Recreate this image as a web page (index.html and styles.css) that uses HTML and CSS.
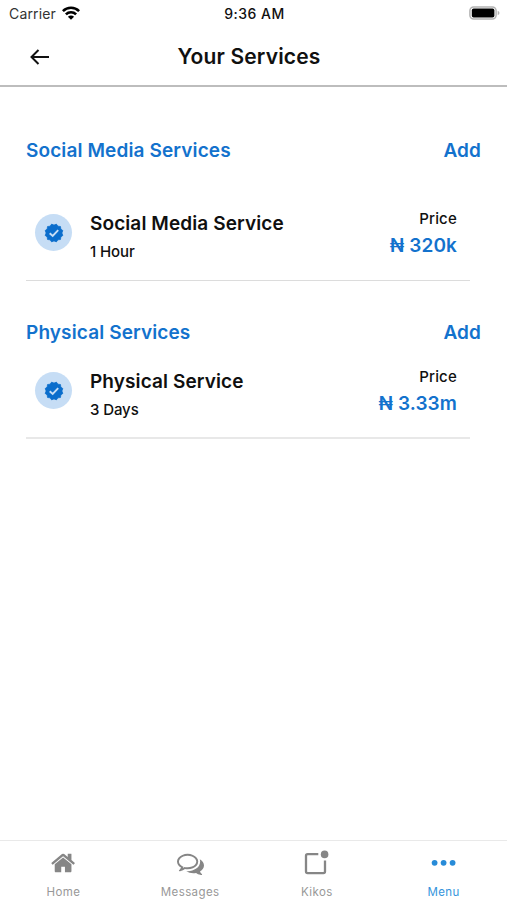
FILE: index.html
```html
<!DOCTYPE html>
<html lang="en">
<head>
<meta charset="UTF-8">
<meta name="viewport" content="width=device-width, initial-scale=1.0">
<title>Your Services</title>
<link rel="stylesheet" href="styles.css">
</head>
<body>

<!-- Status bar -->
<div class="status-bar">
    <div class="carrier">
        <span class="carrier-name">Carrier</span>
        <svg class="wifi" viewBox="0 0 18 14" width="18" height="14">
            <g fill="none" stroke="#000" stroke-width="2.6">
                <path d="M.9 5.1C5.4.6 12.6.6 17.1 5.1"/>
                <path d="M3.9 8.4C6.7 5.6 11.3 5.6 14.1 8.4"/>
            </g>
            <path d="M9 13.8L5.9 10.8C7.6 9.2 10.4 9.2 12.1 10.8Z"/>
        </svg>
    </div>
    <span class="time">9:36 AM</span>
    <svg class="battery" viewBox="0 0 31 14" width="31" height="14">
        <rect x=".9" y=".9" width="26.2" height="12.2" rx="3.8" fill="#fff" stroke="#b3b3b3" stroke-width="1.5"/>
        <rect x="2.8" y="2.6" width="22.6" height="8.9" rx="1.8"/>
        <path d="M28.7 4.8q1.8.7 1.8 2.2t-1.8 2.2z" fill="#b3b3b3"/>
    </svg>
</div>

<!-- Header -->
<div class="header">
    <svg class="back" viewBox="0 0 20 16" width="20" height="16">
        <path d="M19 8H1.5M8.5 1L1.5 8l7 7" fill="none" stroke="#111" stroke-width="2"/>
    </svg>
    <h1 class="title">Your Services</h1>
</div>

<!-- Services -->
<div class="content">
    <div class="section social">
        <div class="section-head">
            <h2>Social Media Services</h2>
            <a class="add">Add</a>
        </div>
        <div class="service">
            <div class="badge">
                <svg viewBox="0 0 20 20" width="20" height="20">
                    <path class="seal" d="M10 2.1L12.38 1.11 13.95 3.16 16.5 3.5 16.84 6.05 18.89 7.62 17.9 10 18.89 12.38 16.84 13.95 16.5 16.5 13.95 16.84 12.38 18.89 10 17.9 7.62 18.89 6.05 16.84 3.5 16.5 3.16 13.95 1.11 12.38 2.1 10 1.11 7.62 3.16 6.05 3.5 3.5 6.05 3.16 7.62 1.11Z"/>
                    <path class="check" d="M5.7 10.2L8.7 13 14.2 7.2"/>
                </svg>
            </div>
            <div class="info">
                <h3>Social Media Service</h3>
                <p>1 Hour</p>
            </div>
            <div class="price">
                <span class="label">Price</span>
                <span class="amount">₦ 320k</span>
            </div>
        </div>
    </div>

    <div class="section physical">
        <div class="section-head">
            <h2>Physical Services</h2>
            <a class="add">Add</a>
        </div>
        <div class="service">
            <div class="badge">
                <svg viewBox="0 0 20 20" width="20" height="20">
                    <path class="seal" d="M10 2.1L12.38 1.11 13.95 3.16 16.5 3.5 16.84 6.05 18.89 7.62 17.9 10 18.89 12.38 16.84 13.95 16.5 16.5 13.95 16.84 12.38 18.89 10 17.9 7.62 18.89 6.05 16.84 3.5 16.5 3.16 13.95 1.11 12.38 2.1 10 1.11 7.62 3.16 6.05 3.5 3.5 6.05 3.16 7.62 1.11Z"/>
                    <path class="check" d="M5.7 10.2L8.7 13 14.2 7.2"/>
                </svg>
            </div>
            <div class="info">
                <h3>Physical Service</h3>
                <p>3 Days</p>
            </div>
            <div class="price">
                <span class="label">Price</span>
                <span class="amount">₦ 3.33m</span>
            </div>
        </div>
    </div>
</div>

<!-- Bottom tabs -->
<div class="tabs">
    <div class="tab">
        <svg viewBox="-70 0 1792 1792" width="26" height="26"><path d="M1408 992v480q0 26-19 45t-45 19h-384v-384h-256v384h-384q-26 0-45-19t-19-45v-480q0-1 .5-3t.5-3l575-474 575 474q1 2 1 6zm223-69l-62 74q-8 9-21 11h-3q-13 0-21-7l-692-577-692 577q-12 8-24 7-13-2-21-11l-62-74q-8-10-7-23.5t11-21.5l719-599q32-26 76-26t76 26l244 204v-195q0-14 9-23t23-9h192q14 0 23 9t9 23v408l219 182q10 8 11 21.5t-7 23.5z"/></svg>
        <span>Home</span>
    </div>
    <div class="tab">
        <svg viewBox="0 0 1792 1792" width="27" height="27"><path d="M704 384q-153 0-286 52t-211.5 141-78.5 191q0 82 53 158t149 132l97 56-35 84q34-20 62-39l44-31 53 10q78 14 153 14 153 0 286-52t211.5-141 78.5-191-78.5-191-211.5-141-286-52zm0-128q191 0 353.5 68.5t256.5 186.5 94 257-94 257-256.5 186.5-353.5 68.5q-86 0-176-16-124 88-278 128-36 9-86 16h-3q-11 0-20.5-8t-11.5-21q-1-3-1-6.5t.5-6.5 2-6l2.5-5 3.5-5.5 4-5 4.5-5 4-4.5q5-6 23-25t26-29.5 22.5-29 25-38.5 20.5-44q-124-72-195-177t-71-224q0-139 94-257t256.5-186.5 353.5-68.5zm822 1169q10 24 20.5 44t25 38.5 22.5 29 26 29.5 23 25q1 1 4 4.5t4.5 5 4 5 3.5 5.5l2.5 5 2 6 .5 6.5-1 6.5q-3 14-13 22t-22 7q-50-7-86-16-154-40-278-128-90 16-176 16-271 0-472-132 58 4 88 4 161 0 309-45t264-129q125-92 192-212t67-254q0-77-23-152 129 71 204 178t75 230q0 120-71 224.5t-195 176.5z"/></svg>
        <span>Messages</span>
    </div>
    <div class="tab">
        <svg viewBox="0 0 26 26" width="26" height="26">
            <path d="M14.3 4.2H3.6q-1.6 0-1.6 1.6v15.8q0 1.6 1.6 1.6h15.8q1.6 0 1.6-1.6V10.6" fill="none" stroke="#868686" stroke-width="2.3"/>
            <circle cx="20.6" cy="4.4" r="3.8"/>
        </svg>
        <span>Kikos</span>
    </div>
    <div class="tab active">
        <svg viewBox="0 0 26 26" width="26" height="26">
            <circle cx="3.6" cy="12.8" r="2.9"/>
            <circle cx="12.6" cy="12.8" r="2.9"/>
            <circle cx="21.6" cy="12.8" r="2.9"/>
        </svg>
        <span>Menu</span>
    </div>
</div>

</body>
</html>
```
FILE: styles.css
```css
* {
    box-sizing: border-box;
    margin: 0;
    padding: 0;
}

body {
    display: flex;
    flex-direction: column;
    height: 900px;
    background-color: #fff;
    color: #101010;
    font-family: Inter, "Liberation Sans", sans-serif;
    overflow: hidden;
}

.status-bar {
    display: grid;
    grid-template-columns: 1fr auto 1fr;
    align-items: center;
    height: 27px;
    padding: 0 7px 0 9px;
}

.carrier {
    display: flex;
    align-items: center;
    gap: 6px;
}

.carrier-name {
    font-size: 14px;
    letter-spacing: 0.15px;
    color: #333;
}

.wifi {
    margin-top: -1px;
}

.time {
    font-size: 14px;
    font-weight: 500;
    letter-spacing: 0.5px;
}

.battery {
    justify-self: end;
    margin-top: -1px;
}

.header {
    display: grid;
    grid-template-columns: 1fr auto 1fr;
    align-items: center;
    height: 60px;
    padding: 2px 38px 0 30px;
    border-bottom: 2px solid #bdbdbd;
}

.title {
    font-size: 21px;
    font-weight: 600;
    line-height: 28px;
    letter-spacing: 0.15px;
    margin-left: -1px;
}

.content {
    flex: 1;
    padding: 49px 26px 0;
}

.section-head {
    display: flex;
    justify-content: space-between;
    align-items: center;
    height: 28px;
    color: #1372cd;
}

.section-head h2,
.add {
    font-size: 19px;
    font-weight: 600;
    letter-spacing: 0.12px;
}

.service {
    display: flex;
    align-items: flex-start;
    margin-right: 11px;
    border-bottom: 1px solid #dcdcdc;
}

.social .service {
    height: 89px;
    margin-top: 28px;
}

.physical {
    margin-top: 37px;
}

.physical .service {
    height: 93px;
    padding-top: 4px;
    border-bottom: 2px solid #e8e8e8;
}

.badge {
    display: flex;
    align-items: center;
    justify-content: center;
    width: 37px;
    height: 37px;
    margin: 22px 18px 0 9px;
    border-radius: 50%;
    background-color: #c6ddf5;
}

.seal {
    fill: #0a6dcc;
    stroke: #0a6dcc;
    stroke-width: 0.7;
    stroke-linejoin: round;
}

.check {
    fill: none;
    stroke: #c6ddf5;
    stroke-width: 1.9;
}

.info {
    flex: 1;
    padding-top: 18px;
}

.info h3 {
    font-size: 19px;
    font-weight: 600;
    line-height: 28px;
    letter-spacing: 0.1px;
}

.info p {
    font-size: 15px;
    font-weight: 500;
    line-height: 27px;
    letter-spacing: -0.1px;
}

.price {
    display: flex;
    flex-direction: column;
    align-items: flex-end;
    padding: 14px 13px 0 0;
}

.label {
    font-size: 15px;
    font-weight: 500;
    line-height: 26px;
    letter-spacing: 0.2px;
}

.amount {
    font-size: 19px;
    font-weight: 600;
    line-height: 28px;
    letter-spacing: 0.1px;
    color: #1372cd;
}

.tabs {
    display: flex;
    height: 60px;
    border-top: 1px solid #e9e9e9;
}

.tab {
    display: flex;
    flex: 1;
    flex-direction: column;
    align-items: center;
    justify-content: space-between;
    padding: 9px 0 0;
    fill: #868686;
    color: #989898;
}

.tab span {
    font-size: 11.5px;
    line-height: 16px;
    letter-spacing: 0.4px;
}

.tab.active {
    fill: #278bd8;
    color: #3594dc;
}
```
